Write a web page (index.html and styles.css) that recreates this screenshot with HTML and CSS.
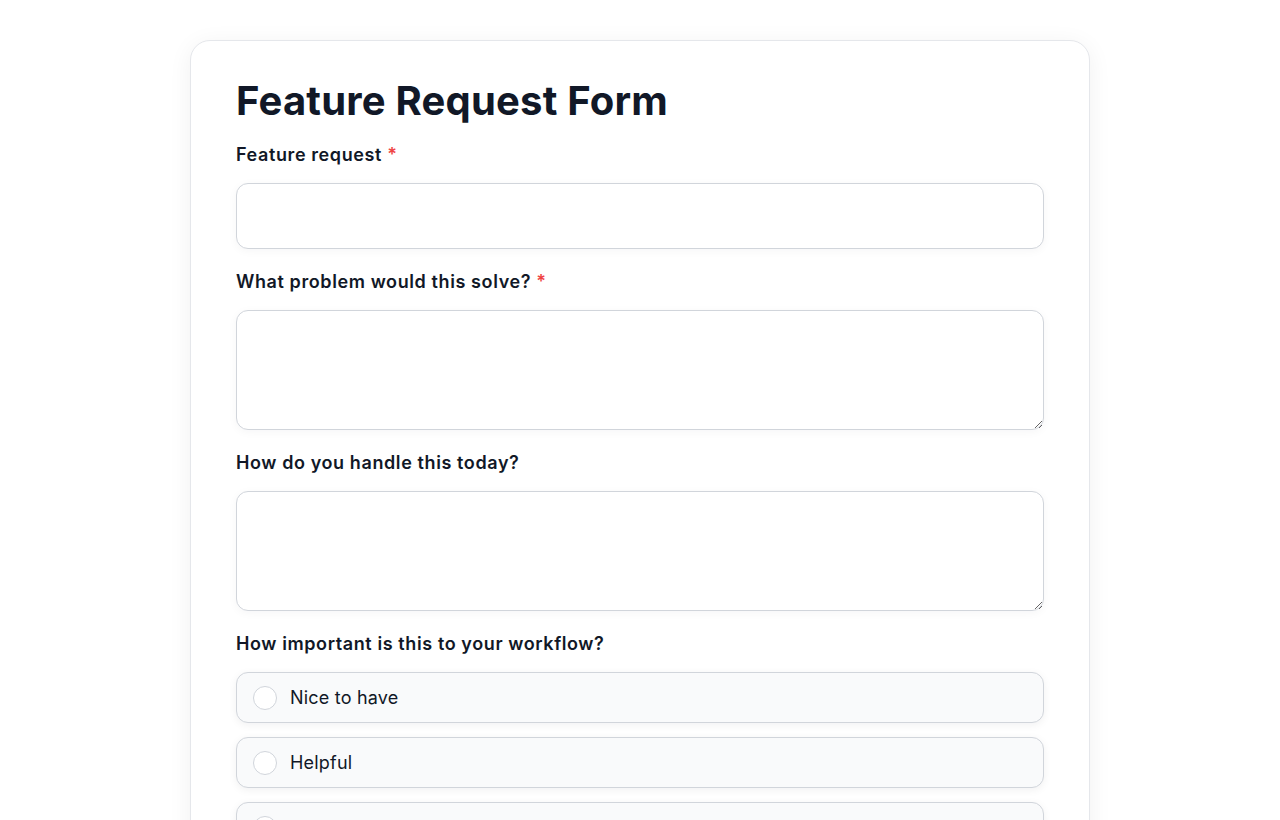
FILE: index.html
```html
<!DOCTYPE html>
<html lang="en">
<head>
<meta charset="UTF-8">
<meta name="viewport" content="width=device-width, initial-scale=1.0">
<title>Feature Request Form</title>
<link rel="stylesheet" href="styles.css">
</head>
<body>
<div class="form-card">
  <h1 class="form-title">Feature Request Form</h1>

  <div class="field">
    <label class="field-label" for="feature">Feature request <span class="req">*</span></label>
    <input class="text-input" id="feature" type="text">
  </div>

  <div class="field">
    <label class="field-label" for="problem">What problem would this solve? <span class="req">*</span></label>
    <textarea class="text-area" id="problem"></textarea>
  </div>

  <div class="field">
    <label class="field-label" for="today">How do you handle this today?</label>
    <textarea class="text-area" id="today"></textarea>
  </div>

  <div class="field">
    <div class="field-label">How important is this to your workflow?</div>
    <div class="options">
      <label class="option"><span class="radio"></span>Nice to have</label>
      <label class="option"><span class="radio"></span>Helpful</label>
      <label class="option"><span class="radio"></span>Important</label>
      <label class="option"><span class="radio"></span>Critical</label>
    </div>
  </div>
</div>
</body>
</html>
```

FILE: styles.css
```css
body {
  font-family: Inter, "Noto Sans", sans-serif;
  background-color: #fff;
  color: #111827;
  margin: 0;
  padding: 40px 0;
}
.form-card {
  width: 808px;
  margin: 0 auto;
  padding: 36px 45px 45px;
  background: #fff;
  border: 1px solid #e5e7eb;
  border-radius: 20px;
  box-shadow: 0 4px 24px rgba(17, 24, 39, 0.06);
}
.form-title {
  font-size: 40px;
  line-height: 48px;
  font-weight: 700;
  margin: 0 0 18px;
  letter-spacing: 0.2px;
}
.field {
  margin-bottom: 21px;
}
.field-label {
  display: block;
  font-size: 18px;
  line-height: 24px;
  font-weight: 600;
  letter-spacing: 0.6px;
  margin-bottom: 16px;
}
.req {
  color: #ef4444;
}
.text-input, .text-area {
  display: block;
  box-sizing: border-box;
  width: 100%;
  border: 1px solid #d1d5db;
  border-radius: 12px;
  background: #fff;
  font: inherit;
  box-shadow: 0 2px 10px rgba(17, 24, 39, 0.04);
}
.text-input {
  height: 66px;
}
.text-area {
  height: 120px;
  resize: vertical;
}
.options {
  display: flex;
  flex-direction: column;
  gap: 14px;
}
.option {
  display: flex;
  align-items: center;
  gap: 13px;
  height: 51px;
  box-sizing: border-box;
  padding: 0 16px;
  background: #f9fafb;
  border: 1px solid #d1d5db;
  border-radius: 12px;
  font-size: 18px;
  letter-spacing: 0.2px;
  box-shadow: 0 2px 8px rgba(17, 24, 39, 0.06);
}
.radio {
  width: 24px;
  height: 24px;
  box-sizing: border-box;
  border: 1px solid #d1d5db;
  border-radius: 50%;
  background: #fff;
}
```
